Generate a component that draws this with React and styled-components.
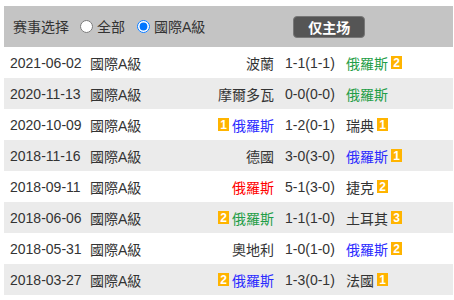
import React, { useState } from 'react'
import styled, { createGlobalStyle } from 'styled-components'

const GlobalStyle = createGlobalStyle`
  body {
    margin: 0;
    background: #fff;
    font-family: "Liberation Sans", "Noto Sans CJK SC", sans-serif;
    font-size: 14px;
    color: #333;
  }
`

const Wrap = styled.div`
  width: 449px;
  margin: 6px 0 0 4px;
`

const FilterBar = styled.div`
  display: flex;
  align-items: center;
  height: 41px;
  padding-left: 9px;
  background: #c4c4c4;
`

const Label = styled.span`
  margin-right: 11px;
  line-height: 1;
`

const RadioLabel = styled.label`
  display: flex;
  align-items: center;
  gap: 4px;
  margin-right: 12px;
  line-height: 1;

  input {
    width: 13px;
    height: 13px;
    margin: 0;
  }
`

const HomeButton = styled.button`
  margin-left: 76px;
  width: 72px;
  height: 22px;
  border: 1px solid #777;
  border-radius: 4px;
  background: #555;
  color: #fff;
  font-family: "Noto Sans CJK SC", sans-serif;
  font-size: 14px;
  font-weight: bold;
  line-height: 1;
  padding: 0;
`

const Row = styled.div`
  display: grid;
  grid-template-columns: 80px 70px 114px 72px 1fr;
  align-items: center;
  height: 31px;
  padding-left: 6px;
  background: ${p => (p.$shaded ? '#ebebeb' : '#fff')};
  white-space: nowrap;
`

const Home = styled.div`
  display: flex;
  justify-content: flex-end;
  align-items: center;
  gap: 3px;
`

const Score = styled.div`
  padding-left: 11px;
`

const Away = styled.div`
  display: flex;
  align-items: center;
  gap: 3px;
`

const Team = styled.span`
  color: ${p => p.$color || '#333'};
`

const Badge = styled.span`
  display: inline-flex;
  align-items: center;
  justify-content: center;
  width: 11px;
  height: 13px;
  background: #ffb400;
  color: #fff;
  font-size: 12px;
  font-weight: bold;
  line-height: 1;
`

const GREEN = '#1f9e48'
const BLUE = '#2b2bff'
const RED = '#ff0000'

const matches = [
  { date: '2021-06-02', home: '波蘭', score: '1-1(1-1)', away: '俄羅斯', awayColor: GREEN, awayBadge: 2 },
  { date: '2020-11-13', home: '摩爾多瓦', score: '0-0(0-0)', away: '俄羅斯', awayColor: GREEN },
  { date: '2020-10-09', home: '俄羅斯', homeColor: BLUE, homeBadge: 1, score: '1-2(0-1)', away: '瑞典', awayBadge: 1 },
  { date: '2018-11-16', home: '德國', score: '3-0(3-0)', away: '俄羅斯', awayColor: BLUE, awayBadge: 1 },
  { date: '2018-09-11', home: '俄羅斯', homeColor: RED, score: '5-1(3-0)', away: '捷克', awayBadge: 2 },
  { date: '2018-06-06', home: '俄羅斯', homeColor: GREEN, homeBadge: 2, score: '1-1(1-0)', away: '土耳其', awayBadge: 3 },
  { date: '2018-05-31', home: '奧地利', score: '1-0(1-0)', away: '俄羅斯', awayColor: BLUE, awayBadge: 2 },
  { date: '2018-03-27', home: '俄羅斯', homeColor: BLUE, homeBadge: 2, score: '1-3(0-1)', away: '法國', awayBadge: 1 },
]

export default function App() {
  const [scope, setScope] = useState('intl')
  return (
    <Wrap>
      <GlobalStyle />
      <FilterBar>
        <Label>赛事选择</Label>
        <RadioLabel>
          <input type="radio" name="scope" checked={scope === 'all'} onChange={() => setScope('all')} />
          全部
        </RadioLabel>
        <RadioLabel>
          <input type="radio" name="scope" checked={scope === 'intl'} onChange={() => setScope('intl')} />
          國際A級
        </RadioLabel>
        <HomeButton>仅主场</HomeButton>
      </FilterBar>
      {matches.map((m, i) => (
        <Row key={m.date} $shaded={i % 2 === 1}>
          <span>{m.date}</span>
          <span>國際A級</span>
          <Home>
            {m.homeBadge && <Badge>{m.homeBadge}</Badge>}
            <Team $color={m.homeColor}>{m.home}</Team>
          </Home>
          <Score>{m.score}</Score>
          <Away>
            <Team $color={m.awayColor}>{m.away}</Team>
            {m.awayBadge && <Badge>{m.awayBadge}</Badge>}
          </Away>
        </Row>
      ))}
    </Wrap>
  )
}
